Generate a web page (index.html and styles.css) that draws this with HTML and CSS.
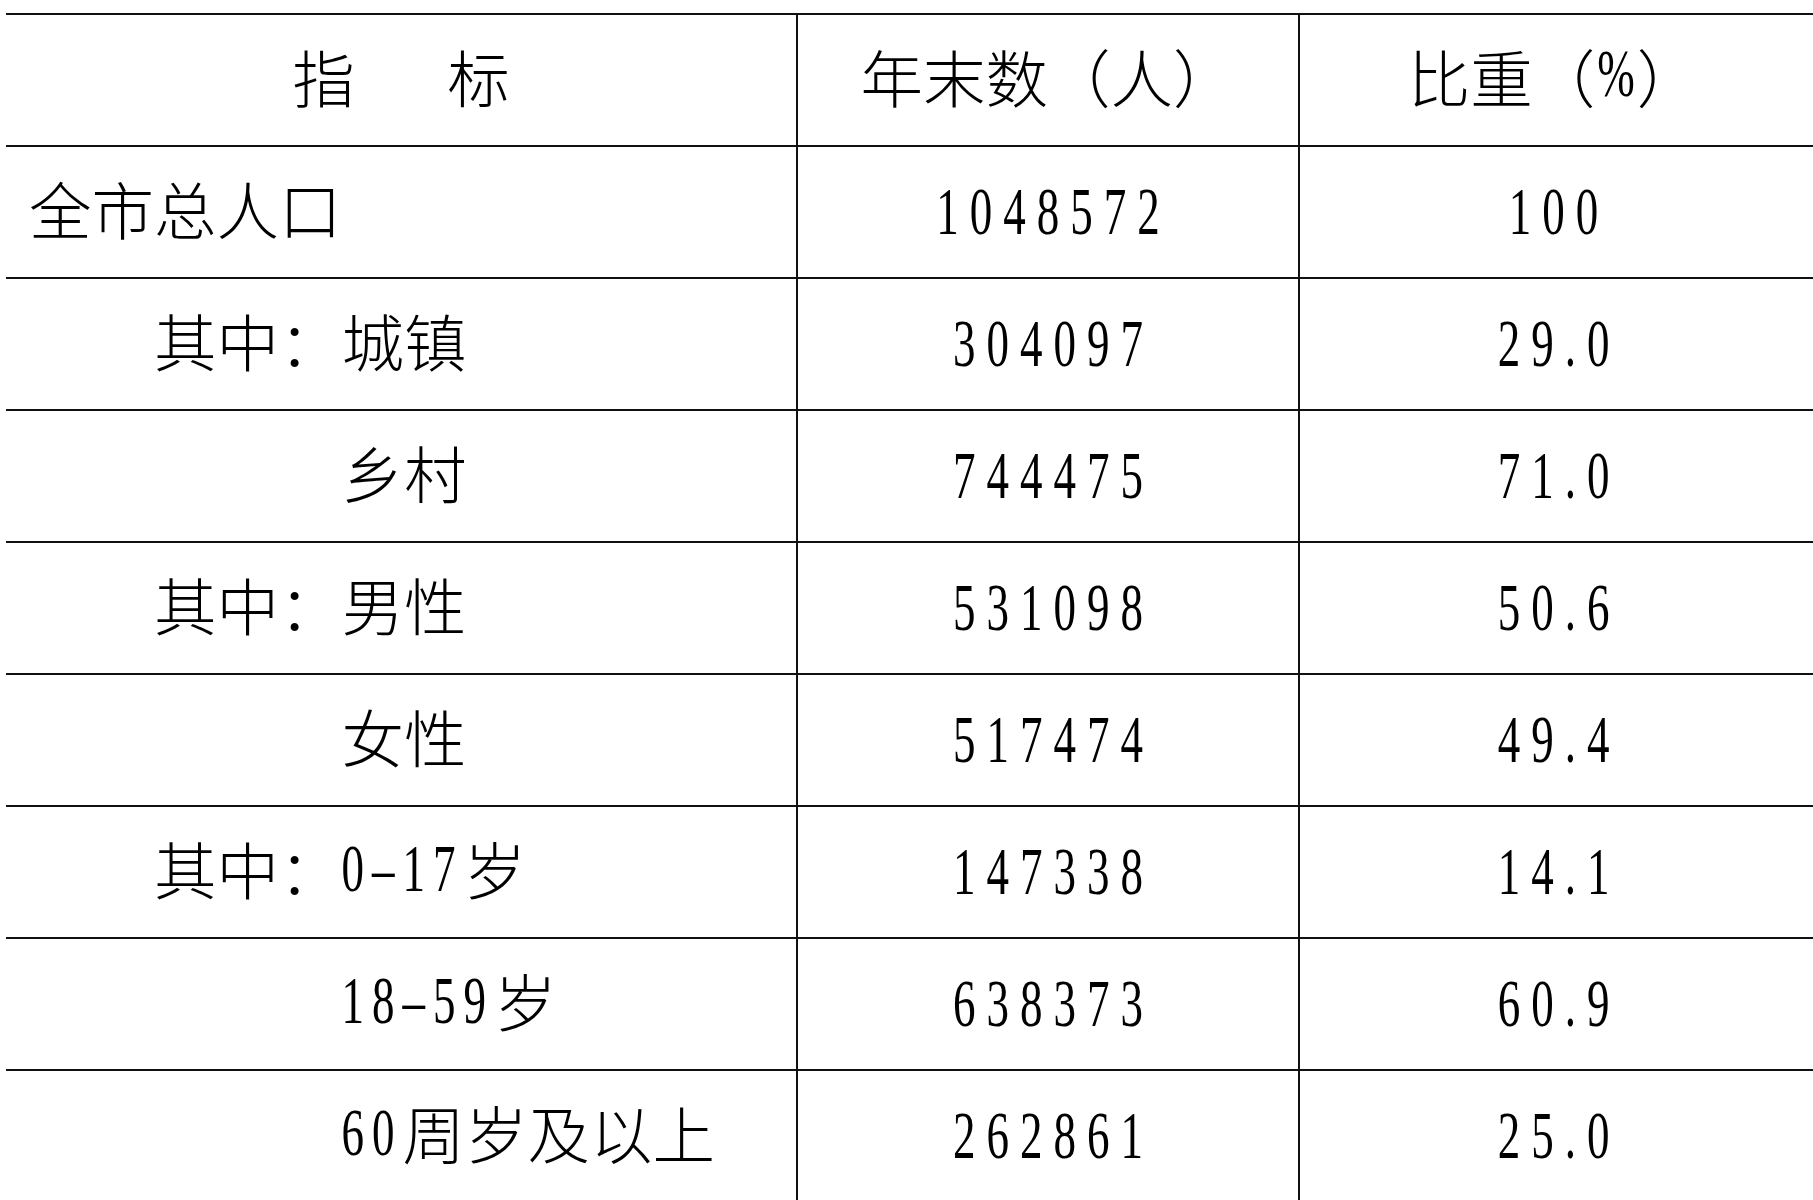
FILE: index.html
```html
<!DOCTYPE html>
<html lang="zh-CN">
<head>
<meta charset="utf-8">
<title>人口指标</title>
<link rel="stylesheet" href="styles.css">
</head>
<body>
<div class="sheet" role="table">
  <div class="row" role="row">
    <div class="cell name head-name" role="columnheader"><span class="spaced">指　标</span></div>
    <div class="cell val cjk" role="columnheader">年末数（人）</div>
    <div class="cell val cjk last" role="columnheader">比重（<span class="pct">%</span>）</div>
  </div>
  <div class="row" role="row">
    <div class="cell name" role="cell">全市总人口</div>
    <div class="cell val" role="cell"><span class="num">1048572</span></div>
    <div class="cell val last" role="cell"><span class="num">100</span></div>
  </div>
  <div class="row" role="row">
    <div class="cell name lv1" role="cell">其中：城镇</div>
    <div class="cell val" role="cell"><span class="num">304097</span></div>
    <div class="cell val last" role="cell"><span class="num">29.0</span></div>
  </div>
  <div class="row" role="row">
    <div class="cell name lv2" role="cell">乡村</div>
    <div class="cell val" role="cell"><span class="num">744475</span></div>
    <div class="cell val last" role="cell"><span class="num">71.0</span></div>
  </div>
  <div class="row" role="row">
    <div class="cell name lv1" role="cell">其中：男性</div>
    <div class="cell val" role="cell"><span class="num">531098</span></div>
    <div class="cell val last" role="cell"><span class="num">50.6</span></div>
  </div>
  <div class="row" role="row">
    <div class="cell name lv2" role="cell">女性</div>
    <div class="cell val" role="cell"><span class="num">517474</span></div>
    <div class="cell val last" role="cell"><span class="num">49.4</span></div>
  </div>
  <div class="row" role="row">
    <div class="cell name lv1" role="cell">其中：<span class="num">0–17</span>岁</div>
    <div class="cell val" role="cell"><span class="num">147338</span></div>
    <div class="cell val last" role="cell"><span class="num">14.1</span></div>
  </div>
  <div class="row" role="row">
    <div class="cell name lv2" role="cell"><span class="num">18–59</span>岁</div>
    <div class="cell val" role="cell"><span class="num">638373</span></div>
    <div class="cell val last" role="cell"><span class="num">60.9</span></div>
  </div>
  <div class="row" role="row">
    <div class="cell name lv2" role="cell"><span class="num">60</span>周岁及以上</div>
    <div class="cell val" role="cell"><span class="num">262861</span></div>
    <div class="cell val last" role="cell"><span class="num">25.0</span></div>
  </div>
</div>
</body>
</html>
```

FILE: styles.css
```css
html, body {
  margin: 0;
  padding: 0;
  background: #ffffff;
  overflow: hidden;
}

.sheet {
  display: grid;
  grid-template-columns: 790px 502px 1fr;
  grid-auto-rows: 132px;
  margin: 13px 0 0 6px;
  font-family: "Noto Sans CJK SC", "Noto Sans", sans-serif;
  font-weight: 300;
  font-size: 62.5px;
  line-height: 1;
  color: #000;
}

.row {
  display: contents;
}

.cell {
  box-sizing: border-box;
  border-top: 2px solid #111;
  display: flex;
  align-items: center;
  white-space: nowrap;
}

.name {
  padding-left: 23px;
  padding-bottom: 7px;
}

.head-name {
  justify-content: center;
  padding-left: 0;
}

.spaced {
  letter-spacing: 15px;
  margin-right: -15px;
}

.lv1 {
  padding-left: calc(23px + 2em);
}

.lv2 {
  padding-left: calc(23px + 5em);
}

.val {
  justify-content: center;
  border-left: 2px solid #111;
}

.last {
  padding-right: 6px;
}

.cjk {
  padding-bottom: 7px;
}

.num,
.pct {
  display: inline-block;
  font-family: "Liberation Serif", "Times New Roman", serif;
  font-weight: 400;
  font-size: 45px;
  line-height: 1;
  transform: scaleY(1.48);
}

.val .num {
  letter-spacing: 11px;
  margin-right: -11px;
}

.name .num {
  letter-spacing: 8px;
  transform: translateY(1px) scaleY(1.48);
}

.pct {
  margin: 0 2px;
  transform: translateY(-2px) scaleY(1.48);
}
```
